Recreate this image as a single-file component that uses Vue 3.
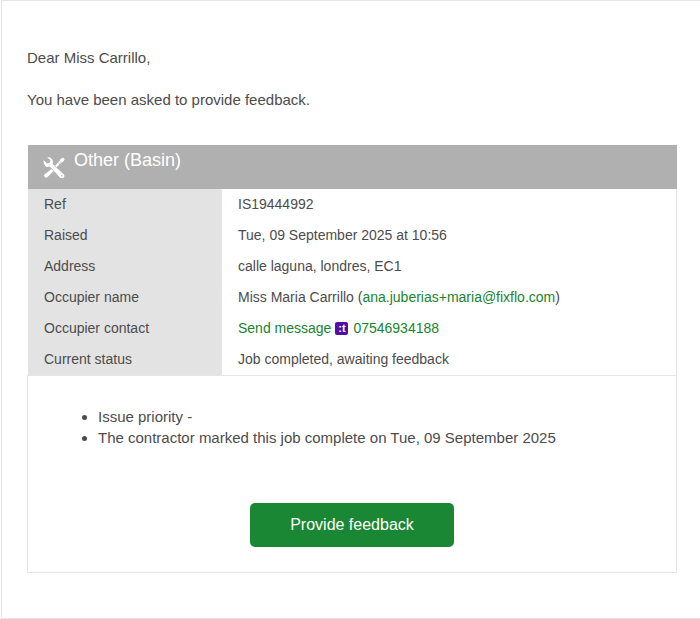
<script setup>
const rows = [
  { label: 'Ref', value: 'IS19444992' },
  { label: 'Raised', value: 'Tue, 09 September 2025 at 10:56' },
  { label: 'Address', value: 'calle laguna, londres, EC1' },
  { label: 'Occupier name', kind: 'name' },
  { label: 'Occupier contact', kind: 'contact' },
  { label: 'Current status', value: 'Job completed, awaiting feedback' }
]
</script>

<template>
  <div class="page">
    <p class="para">Dear Miss Carrillo,</p>
    <p class="para">You have been asked to provide feedback.</p>
    <div class="card">
      <div class="head">
        <svg class="tool" viewBox="0 0 22 21" width="22" height="21" aria-hidden="true">
          <path fill="#fff" d="M.7 3.200 4 6.500 6.800 5.800 7.500 3 4.200.4C7-.3 10 2 10 5 10 5.800 9.800 6.500 9.600 7L20.600 17.200A2.400 2.400 0 0 1 17 20.600L6.800 9.600C6.200 9.800 5.600 10 5 10 2 10 .2 6 .7 3.200Z"/>
          <circle cx="18.800" cy="18.800" r=".8" fill="#b0b0b0"/>
          <path fill="#fff" d="M20 .5 21.700 2.200 20 5 18.700 5.200 13.600 10.300 12 8.700 17 3.600 17.200 2.300Z"/>
          <path fill="#fff" d="M8.600 12 10.600 14 4.600 20A2 2 0 0 1 1.700 17.200Z"/>
          <path stroke="#b0b0b0" stroke-width=".6" fill="none" d="M15.400 6.200 17 7.600M17 4.600 18.500 6"/>
        </svg>
        <span class="title">Other (Basin)</span>
      </div>
      <div class="rows">
        <template v-for="r in rows" :key="r.label">
          <div class="lab">{{ r.label }}</div>
          <div class="val">
            <template v-if="r.kind === 'name'">Miss Maria Carrillo (<a class="lnk">ana.juberias+maria@fixflo.com</a>)</template>
            <template v-else-if="r.kind === 'contact'">
              <a class="lnk">Send message</a>
              <span class="badge">:t</span>
              <a class="lnk">07546934188</a>
            </template>
            <template v-else>{{ r.value }}</template>
          </div>
        </template>
      </div>
      <div class="body">
        <ul class="list">
          <li>Issue priority -</li>
          <li>The contractor marked this job complete on Tue, 09 September 2025</li>
        </ul>
        <a class="btn">Provide feedback</a>
      </div>
    </div>
  </div>
</template>

<style>
html, body { margin: 0; background: #fff; }
</style>

<style scoped>
.page {
  box-sizing: border-box;
  width: 699px;
  height: 619px;
  margin-left: 1px;
  border: 1px solid #e5e5e5;
  border-right: none;
  padding: 46px 22px 0 25px;
  font: 15px/21px "Liberation Sans", Arial, sans-serif;
  color: #4c4c4c;
}
.para { margin: 0 0 21px; }
.card { margin-top: 35px; width: 650px; }
.head {
  box-sizing: border-box;
  height: 44px;
  margin-left: 1px;
  background: #b0b0b0;
  padding: 12px 0 0 15px;
  display: flex;
  align-items: flex-start;
  gap: 9px;
  color: #fff;
}
.tool { flex: none; }
.title { font-size: 18px; line-height: 10px; margin-top: -2px; }
.rows {
  display: grid;
  margin-left: 1px;
  grid-template-columns: 194px 1fr;
  grid-auto-rows: 31px;
  border-right: 1px solid #e5e5e5;
  font-size: 14px;
}
.lab { background: #e3e3e3; padding: 5px 0 0 16px; }
.val { padding: 5px 0 0 16px; }
.lnk { color: #18842f; }
.badge {
  display: inline-block;
  width: 13px;
  height: 13px;
  border-radius: 2px;
  background: #4f0fa6;
  color: #fff;
  font-size: 11px;
  font-weight: 700;
  line-height: 13px;
  text-align: center;
  margin: 0 5px 0 4px;
  vertical-align: 1px;
}
.body {
  box-sizing: border-box;
  height: 198px;
  border: 1px solid #e5e5e5;
  display: flex;
  flex-direction: column;
  align-items: center;
}
.list { align-self: stretch; margin: 30px 0 0; padding: 0 0 0 70px; }
.btn {
  box-sizing: border-box;
  width: 204px;
  height: 44px;
  margin-top: 55px;
  border-radius: 5px;
  background: #198733;
  color: #fff;
  font-size: 16px;
  line-height: 44px;
  text-align: center;
}
</style>
